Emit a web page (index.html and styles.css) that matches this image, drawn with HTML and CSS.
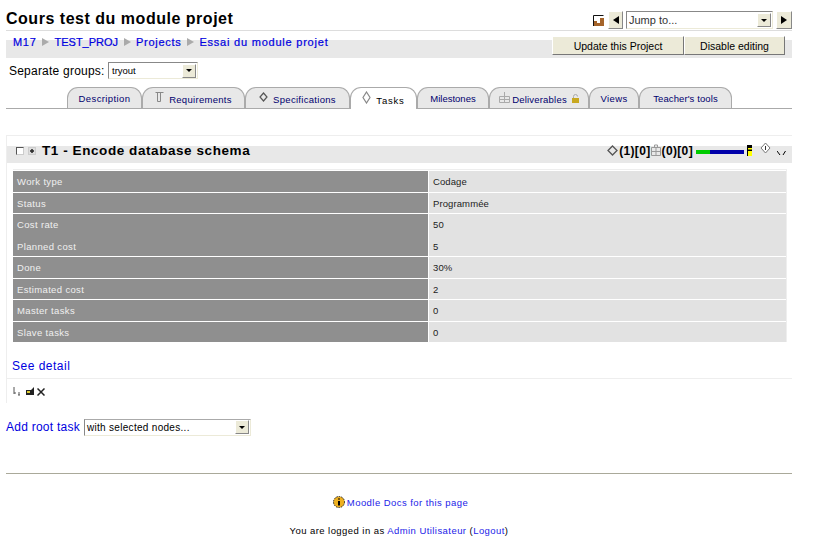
FILE: index.html
```html
<!DOCTYPE html>
<html lang="fr">
<head>
<meta charset="utf-8">
<title>Cours test du module projet</title>
<link rel="stylesheet" href="styles.css">
</head>
<body>
<div class="page">
  <header class="head">
    <h1 class="title">Cours test du module projet</h1>
    <div class="jump">
      <svg class="chart" width="11" height="11" viewBox="0 0 11 11"><path d="M.5 11V.5h10" fill="none" stroke="#111"/><path d="M1 11V6h3v5zM4 11V8h3v3zM7 11V3h4v8z" fill="#a5642a"/><path d="M1 1h10v2H7v3H1z" fill="#fff"/></svg>
      <span class="navbtn left"><span class="tri-l"></span></span>
      <span class="fakeselect jumpsel"><span class="val">Jump to...</span><span class="drop"><span class="tri-d"></span></span></span>
      <span class="navbtn"><span class="tri-r"></span></span>
    </div>
  </header>
  <div class="crumbbar">
    <nav class="crumbs">
      <a href="#">M17</a><span class="sep"></span><a class="tight" href="#">TEST_PROJ</a><span class="sep"></span><a href="#">Projects</a><span class="sep"></span><a class="wide" href="#">Essai du module projet</a>
    </nav>
    <div class="actions">
      <button class="btn b1">Update this Project</button><button class="btn b2">Disable editing</button>
    </div>
  </div>
  <div class="groups">
    <label class="groups-label">Separate groups:</label>
    <span class="fakeselect groupsel"><span class="val">tryout</span><span class="drop"><span class="tri-d"></span></span></span>
  </div>
  <div class="tabs">
    <a class="tab t1" href="#">Description</a>
    <a class="tab iconic t2" href="#"><svg class="ic" width="9" height="13" viewBox="0 0 9 13"><path d="M2.500 1.500h3v9h-3zM.5 1.500h8" fill="none" stroke="#888"/></svg>Requirements</a>
    <a class="tab iconic t3" href="#"><svg class="ic" width="9" height="11" viewBox="0 0 9 11"><path d="M4.500 1 8 5 4.500 9 1 5z" fill="none" stroke="#555" stroke-width="1.200"/></svg>Specifications</a>
    <a class="tab iconic active t4" href="#"><svg class="ic" width="9" height="13" viewBox="0 0 9 13"><path d="M4.500 1 8 6.500 4.500 12 1 6.500z" fill="none" stroke="#888" stroke-width="1.200"/></svg>Tasks</a>
    <a class="tab t5" href="#">Milestones</a>
    <a class="tab iconic t6" href="#"><svg class="ic" width="11" height="13" viewBox="0 0 11 13"><path d="M.5 5.500h10v6H.5zM5.500 1v10.500M.5 8.500h10" fill="none" stroke="#aaa"/></svg>Deliverables<svg class="lock" width="7" height="9" viewBox="0 0 7 9"><path d="M1.500 4V2.500a2 2 0 0 1 4 0" fill="none" stroke="#aaa"/><rect y="4" width="7" height="5" fill="#c8a820"/></svg></a>
    <a class="tab t7" href="#">Views</a>
    <a class="tab t8" href="#">Teacher's tools</a>
  </div>
  <section class="task">
    <div class="taskhead">
      <span class="cb"></span>
      <span class="cb2"></span>
      <h2 class="tasktitle">T1 - Encode database schema</h2>
      <div class="taskmeta">
        <svg class="d1" width="11" height="11" viewBox="0 0 11 11"><path d="M5.500 1 10 5.500 5.500 10 1 5.500z" fill="none" stroke="#555" stroke-width="1.300"/></svg>
        <b>(1)[0]</b>
        <svg width="11" height="13" viewBox="0 0 11 13"><path d="M.5 3.500h9v8h-9zM5 3.500v8M.5 7.500h9M3.500 3.500V1h3v2.500" fill="none" stroke="#999"/></svg>
        <b>(0)[0]</b>
        <span class="bar"><span class="bar-done"></span><span class="bar-todo"></span></span>
        <svg class="flag" width="6" height="11" viewBox="0 0 6 11"><path d="M0 0h5v11H0z" fill="#000"/><path d="M1 6h4v5H1z" fill="#ff0"/><path d="M1 3h4v1.500H1z" fill="#ff0"/></svg>
        <svg class="dia" width="11" height="13" viewBox="0 0 11 13"><path d="M5.500 1 10 6 5.500 11 1 6z" fill="#fff" stroke="#777"/><path d="M5.500 4v4" stroke="#333"/></svg>
        <svg class="chev" width="9" height="5" viewBox="0 0 9 5"><path d="M0 0 3 4M8.500 0 6 4" fill="none" stroke="#000"/></svg>
      </div>
    </div>
    <div class="tablewrap">
      <div class="row"><div class="k">Work type</div><div class="v">Codage</div></div>
      <div class="row"><div class="k">Status</div><div class="v">Programmée</div></div>
      <div class="row nogap"><div class="k">Cost rate</div><div class="v">50</div></div>
      <div class="row"><div class="k">Planned cost</div><div class="v">5</div></div>
      <div class="row"><div class="k">Done</div><div class="v">30%</div></div>
      <div class="row"><div class="k">Estimated cost</div><div class="v">2</div></div>
      <div class="row"><div class="k">Master tasks</div><div class="v">0</div></div>
      <div class="row"><div class="k">Slave tasks</div><div class="v">0</div></div>
    </div>
    <a class="detail" href="#">See detail</a>
    <div class="tools">
      <svg width="8" height="9" viewBox="0 0 8 9"><path d="M1 0v7M1 6h2M6 5v3M5 8h2" stroke="#555" fill="none"/></svg>
      <svg class="t-edit" width="8" height="9" viewBox="0 0 8 9"><path d="M0 3h5l3-3v8H0z" fill="#222"/><path d="M1 4h3v2H1z" fill="#dc3"/></svg>
      <svg width="8" height="8" viewBox="0 0 8 8"><path d="M.5.500l7 7M7.500.500l-7 7" stroke="#222" stroke-width="1.500"/></svg>
    </div>
  </section>
  <div class="addroot">
    <a class="addlink" href="#">Add root task</a>
    <span class="fakeselect nodesel"><span class="val">with selected nodes...</span><span class="drop"><span class="tri-d"></span></span></span>
  </div>
  <hr class="rule">
  <footer class="foot">
    <p class="docs"><svg width="12" height="12" viewBox="0 0 12 12"><circle cx="6" cy="6" r="5.500" fill="#eeb020" stroke="#222" stroke-dasharray="1.500 1"/><path d="M6 2.500v1M6 5v4.500" stroke="#000" stroke-width="2"/></svg><a href="#">Moodle Docs for this page</a></p>
    <p class="login">You are logged in as <a href="#">Admin Utilisateur</a> (<a href="#">Logout</a>)</p>
  </footer>
</div>
</body>
</html>
```
FILE: styles.css
```css
* { box-sizing: border-box; }
html, body { margin: 0; padding: 0; background: #fff; }
body { font-family: "Liberation Sans", Arial, sans-serif; font-size: 10px; color: #000; overflow: hidden; }
a { color: #0000e0; text-decoration: none; }
.page { width: 792px; padding-left: 6px; height: 543px; }

.head { display: flex; justify-content: space-between; align-items: flex-start; height: 30px; }
.title { margin: 10px 0 0; font-size: 16px; line-height: 18px; letter-spacing: .52px; font-weight: bold; }
.jump { display: flex; align-items: flex-start; padding-top: 11px; height: 30px; }
.chart { margin: 4px 4px 0 0; }
.navbtn { width: 16px; height: 18px; background: #ecead8; border: 1px solid; border-color: #fff #888 #888 #fff; display: flex; align-items: center; justify-content: center; }
.navbtn.left { width: 15px; }
.tri-l { border: 4px solid transparent; border-left: 0; border-right: 6px solid #000; }
.tri-r { border: 4px solid transparent; border-right: 0; border-left: 6px solid #000; }
.tri-d { border: 3px solid transparent; border-bottom: 0; border-top: 3px solid #000; }
.fakeselect { display: flex; align-items: center; justify-content: space-between; background: #fff; border: 1px solid; border-color: #888 #ecead8 #ecead8 #888; font-size: 10px; }
.val { padding-left: 2px; white-space: nowrap; }
.drop { width: 14px; height: 14px; background: #ecead8; border: 1px solid; border-color: #fff #888 #888 #fff; display: flex; align-items: center; justify-content: center; margin-right: 1px; }
.jumpsel { width: 147px; height: 18px; margin: 0 3px; font-size: 11px; }
.jumpsel .val { color: #333; padding-left: 2px; }

.crumbbar { display: flex; justify-content: space-between; height: 28px; border-top: 1px solid #ddd; background: linear-gradient(#fff 0, #fff 9px, #e8e8e8 9px, #e8e8e8 27px); }
.crumbs { display: flex; align-items: center; height: 22px; padding-left: 7px; font-size: 11px; font-weight: normal; letter-spacing: .7px; }
.crumbs a { -webkit-text-stroke: .2px; }
.crumbs a.tight { letter-spacing: 0; }
.crumbs a.wide { letter-spacing: .78px; }
.sep { width: 0; height: 0; margin: 0 5.5px; border: 4px solid transparent; border-right: 0; border-left: 7px solid #aaa; }
.actions { display: flex; margin: 5px 7px 0 0; align-self: flex-start; }
.btn { height: 19px; padding: 0; margin: 0; font: 10.5px "Liberation Sans", Arial, sans-serif; background: #ecead8; color: #000; border: 1px solid; border-color: #fff #777 #777 #fff; }
.b1 { width: 132px; }
.b2 { width: 101px; }

.groups { display: flex; align-items: center; height: 17px; margin-top: 4px; padding-left: 3px; }
.groups-label { font-size: 12px; letter-spacing: .22px; width: 99px; white-space: nowrap; }
.groupsel { width: 90px; height: 17px; font-size: 9.5px; }
.groupsel .val { padding-left: 3px; }

.tabs { display: flex; height: 22px; margin-top: 8px; padding-left: 61px; border-bottom: 1px solid #aaa; align-items: stretch; }
.tab { display: flex; align-items: center; justify-content: center; gap: 5px; height: 21px; font-size: 9.5px; color: #00006e; background: #e8e8e8; border: 1px solid #aaa; border-bottom: 0; border-radius: 11px 11px 0 0; letter-spacing: .4px; white-space: nowrap; }
.tab.iconic { padding-top: 3px; }
.tab.iconic .ic { margin-top: -5px; }
.tab.iconic .lock { margin-top: -3px; }
.tab.active { height: 22px; background: #fff; color: #000; position: relative; letter-spacing: .8px; }
.t1 { width: 75px; }
.t2 { width: 103px; letter-spacing: .3px; }
.t3 { width: 105px; letter-spacing: .3px; }
.t4 { width: 67px; }
.t5 { width: 72px; letter-spacing: 0; }
.t6 { width: 100px; gap: 2px; letter-spacing: .2px; }
.t7 { width: 50px; }
.t8 { width: 93px; letter-spacing: .1px; }
.lock { margin-left: 3px; }

.task { margin-top: 26px; height: 268px; border-top: 1px solid #eee; border-left: 1px solid #eee; }
.taskhead { display: flex; align-items: flex-start; height: 17px; margin-top: 10px; background: #e8e8e8; padding-left: 9px; }
.cb { width: 8px; height: 8px; margin-top: 1px; background: #fff; border: 1px solid; border-color: #555 #ccc #ccc #555; }
.cb2 { width: 8px; height: 8px; margin: 1px 0 0 4px; background: radial-gradient(circle, #333 0 1.500px, #ddd 2px); border: 1px solid #ccc; }
.tasktitle { margin: -3px 0 0 6px; font-size: 13.5px; line-height: 16px; letter-spacing: .57px; font-weight: bold; }
.taskmeta { margin-left: auto; display: flex; align-items: center; font-size: 12px; height: 9px; }
.taskmeta b { letter-spacing: .35px; line-height: 14px; }
.d1 { margin-right: 1px; }
.bar { display: flex; height: 4px; width: 48px; margin: 3px 3px 0 3px; }
.bar-done { width: 14px; background: #0c0; }
.bar-todo { flex: 1; background: #00a; }
.flag { margin-top: -1px; }
.dia { margin-left: 7px; margin-top: -5px; }
.chev { margin: 5px 6px 0 6px; }
.tablewrap { margin: 6px 5px 0 6px; padding: 1px 0 0; border: 1px solid #eee; border-width: 1px 1px 0 0; }
.row { display: grid; grid-template-columns: 415px 1fr; grid-template-rows: 20.5px; column-gap: 1px; margin-bottom: 1px; line-height: 22px; font-size: 9.5px; }
.row.nogap { margin-bottom: 0; grid-template-rows: 21.5px; }
.k { background: #8f8f8f; color: #f0f0f0; padding-left: 4px; letter-spacing: .35px; }
.v { background: #e2e2e2; color: #222; padding-left: 4px; letter-spacing: .1px; }
.detail { display: block; height: 36px; padding: 16px 0 0 5px; font-size: 12px; line-height: 15px; letter-spacing: .5px; border-bottom: 1px solid #eee; }
.tools { display: flex; gap: 3px; align-items: center; padding: 8px 0 0 6px; }
.t-edit { margin-left: 2px; }

.addroot { display: flex; align-items: center; height: 18px; margin-top: 15px; }
.addlink { font-size: 12px; letter-spacing: .25px; width: 78px; white-space: nowrap; }
.nodesel { width: 167px; height: 17px; font-size: 10px; letter-spacing: .3px; border-top-color: #aaa; }
.rule { border: 0; height: 1px; background: #aaa99a; margin: 37px 0 0; }
.foot { text-align: center; font-size: 9.5px; letter-spacing: .44px; }
.docs { margin: 22px 0 0; padding-left: 3px; display: flex; justify-content: center; align-items: center; gap: 2px; height: 12px; }
.login { margin: 17px 0 0; line-height: 11px; }
.login a, .docs a { color: #2222e8; }
```
